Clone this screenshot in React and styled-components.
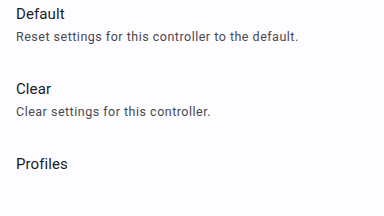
import React from 'react';
import styled, { createGlobalStyle } from 'styled-components';

const GlobalStyle = createGlobalStyle`
	html, body {
		margin: 0;
		padding: 0;
		background: #fdfcff;
	}
	* {
		box-sizing: border-box;
	}
`;

const Page = styled.div`
	width: 384px;
	height: 216px;
	display: flex;
	flex-direction: column;
	background: #fdfcff;
	font-family: Roboto, 'Liberation Sans', sans-serif;
	overflow: hidden;
`;

const List = styled.div`
	flex: 1;
	display: flex;
	flex-direction: column;
`;

const Item = styled.div`
	height: 75px;
	padding: 4px 16px 0;
	display: flex;
	flex-direction: column;
	cursor: pointer;
	flex-shrink: 0;
`;

const Title = styled.div`
	font-size: 15px;
	line-height: 20px;
	letter-spacing: 0.1px;
	color: #1c1b1f;
`;

const Summary = styled.div`
	margin-top: 5px;
	font-size: 12.5px;
	line-height: 16px;
	letter-spacing: 0.5px;
	color: #4a484f;
	white-space: nowrap;
`;

const BottomBar = styled.div`
	height: 7px;
	background: #f0eff4;
`;

const items = [
	{ title: 'Default', summary: 'Reset settings for this controller to the default.' },
	{ title: 'Clear', summary: 'Clear settings for this controller.' },
	{ title: 'Profiles' },
];

const App = () => {
	return (
		<Page>
			<GlobalStyle />
			<List>
				{items.map(item => (
					<Item key={item.title}>
						<Title>{item.title}</Title>
						{item.summary && <Summary>{item.summary}</Summary>}
					</Item>
				))}
			</List>
			<BottomBar />
		</Page>
	);
};

export default App;
